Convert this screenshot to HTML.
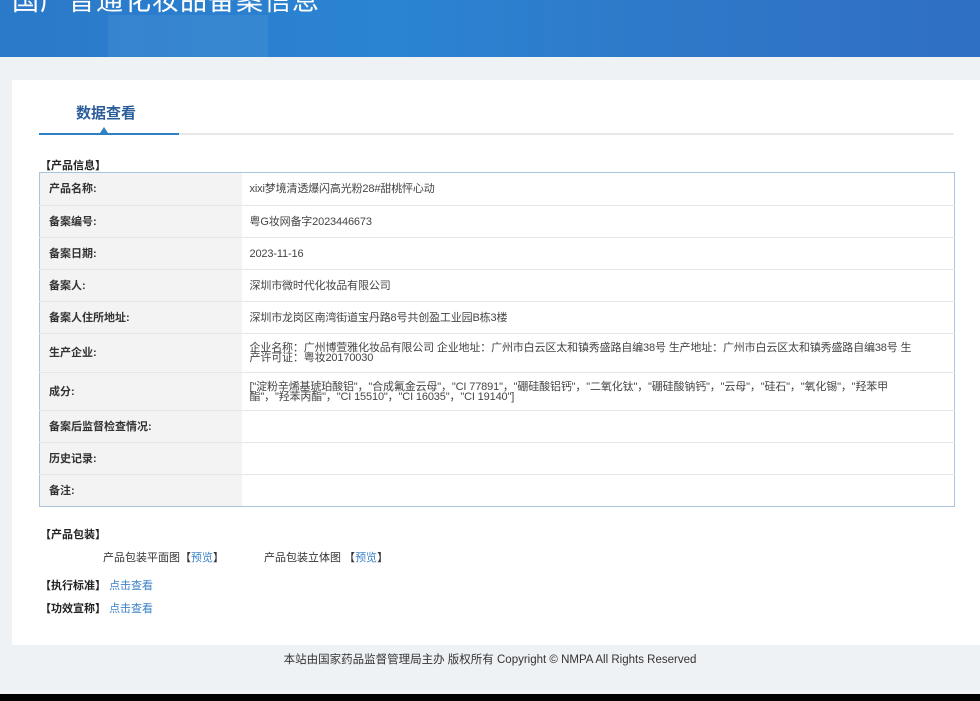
<!DOCTYPE html>
<html><head><meta charset="utf-8"><style>
*{margin:0;padding:0;box-sizing:border-box}
body{width:980px;height:701px;overflow:hidden;background:#eff2f5;font-family:"Liberation Sans","Noto Sans CJK SC",sans-serif;font-size:11px;color:#333;position:relative}
.hdr{position:absolute;left:0;top:0;width:980px;height:57px;background:linear-gradient(90deg,#2b79c9 0%,#2a84d2 40%,#2f78c8 70%,#2f6fc4 100%);overflow:hidden}
.hdr .t{position:absolute;left:12px;top:-21px;font-size:27px;color:#fff;letter-spacing:1px;white-space:nowrap}
.hdr .b{position:absolute;left:108px;top:15px;width:160px;height:42px;background:rgba(255,255,255,0.06)}
.card{position:absolute;left:12px;top:80px;width:968px;height:565px;background:#fff}
.tab{position:absolute;left:76px;top:102px;font-size:15px;font-weight:bold;color:#2a5d9a}
.line{position:absolute;left:39px;top:133px;width:915px;height:2px;background:#e8e8e8}
.line i{position:absolute;left:0;top:0;width:140px;height:2px;background:#2f80c4}
.tri{position:absolute;left:100px;top:127px;width:0;height:0;border-left:4px solid transparent;border-right:4px solid transparent;border-bottom:6px solid #2f80c4}
.sec{position:absolute;left:40px;font-weight:bold;color:#222;font-size:11px}
table{position:absolute;left:39px;top:172px;width:916px;border-collapse:collapse;border:1px solid #a9c4dd}
td{border-bottom:1px solid #e6e6e6;height:32px;vertical-align:middle;line-height:10px}
tr:first-child td{height:33px}
td.l{width:202px;background:#f3f3f3;font-weight:bold;padding-left:9px;color:#333}
td.v{padding-left:8px;color:#444;letter-spacing:-0.15px}
a{color:#3b82c6;text-decoration:none}
.foot{position:absolute;left:0;top:651px;width:980px;text-align:center;font-size:11.5px;color:#333}
.blk{position:absolute;left:0;top:694px;width:980px;height:7px;background:#000}
</style></head><body>
<div class="hdr"><div class="b"></div><div class="t">国产普通化妆品备案信息</div></div>
<div class="card"></div>
<div class="tab">数据查看</div>
<div class="line"><i></i></div>
<div class="tri"></div>
<div class="sec" style="top:157px">【产品信息】</div>
<table>
<tr><td class="l">产品名称:</td><td class="v">xixi梦境清透爆闪高光粉28#甜桃怦心动</td></tr>
<tr><td class="l">备案编号:</td><td class="v">粤G妆网备字2023446673</td></tr>
<tr><td class="l">备案日期:</td><td class="v">2023-11-16</td></tr>
<tr><td class="l">备案人:</td><td class="v">深圳市微时代化妆品有限公司</td></tr>
<tr><td class="l">备案人住所地址:</td><td class="v">深圳市龙岗区南湾街道宝丹路8号共创盈工业园B栋3楼</td></tr>
<tr><td class="l" style="height:39px">生产企业:</td><td class="v">企业名称：广州博萱雅化妆品有限公司 企业地址：广州市白云区太和镇秀盛路自编38号 生产地址：广州市白云区太和镇秀盛路自编38号 生<br>产许可证：粤妆20170030</td></tr>
<tr><td class="l" style="height:38px">成分:</td><td class="v">["淀粉辛烯基琥珀酸铝"，"合成氟金云母"，"CI 77891"，"硼硅酸铝钙"，"二氧化钛"，"硼硅酸钠钙"，"云母"，"硅石"，"氧化锡"，"羟苯甲<br>酯"，"羟苯丙酯"，"CI 15510"，"CI 16035"，"CI 19140"]</td></tr>
<tr><td class="l">备案后监督检查情况:</td><td class="v"></td></tr>
<tr><td class="l">历史记录:</td><td class="v"></td></tr>
<tr><td class="l" style="border-bottom:none">备注:</td><td class="v" style="border-bottom:none"></td></tr>
</table>
<div class="sec" style="top:526px">【产品包装】</div>
<div style="position:absolute;left:103px;top:549px">产品包装平面图【<a>预览</a>】</div>
<div style="position:absolute;left:264px;top:549px">产品包装立体图 【<a>预览</a>】</div>
<div class="sec" style="top:577px">【执行标准】 <a style="font-weight:normal">点击查看</a></div>
<div class="sec" style="top:600px">【功效宣称】 <a style="font-weight:normal">点击查看</a></div>
<div class="foot">本站由国家药品监督管理局主办 版权所有 Copyright © NMPA All Rights Reserved</div>
<div class="blk"></div>
</body></html>
